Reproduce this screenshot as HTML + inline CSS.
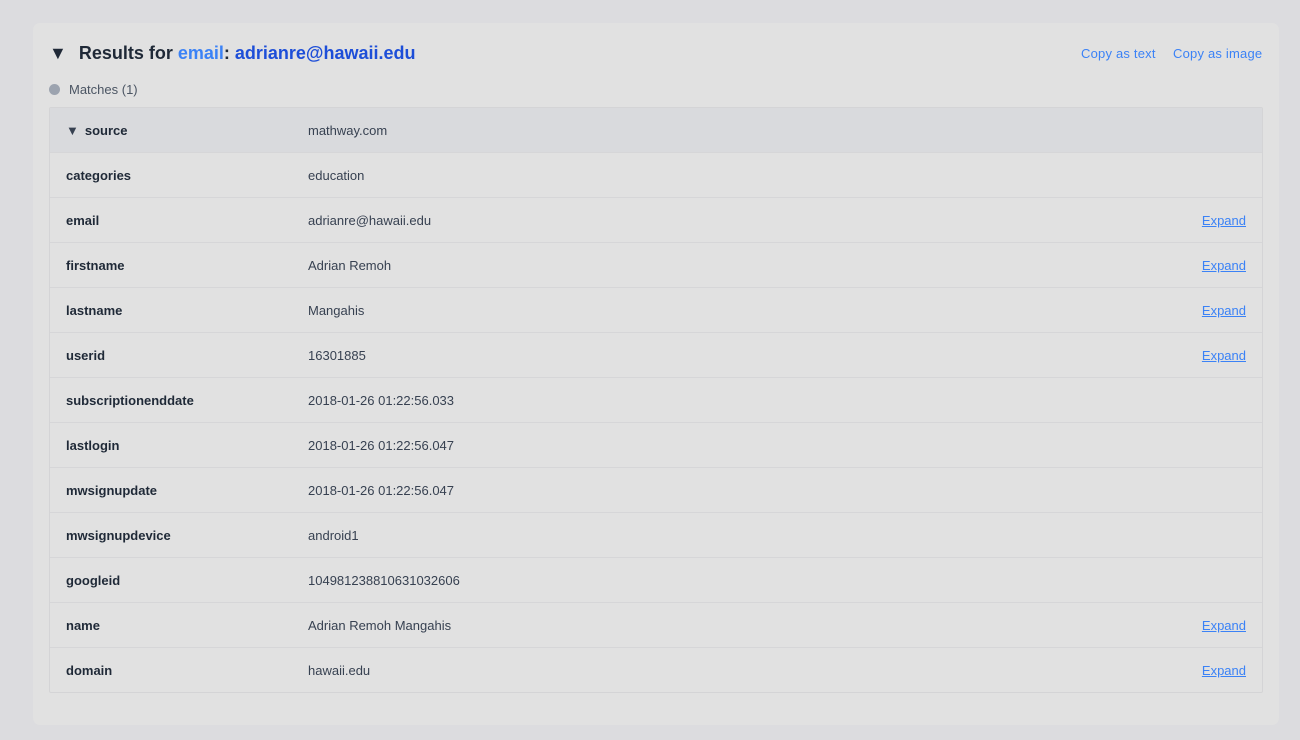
<!DOCTYPE html>
<html><head><style>
body{margin:0;background:#dcdcdf;font-family:"Liberation Sans",sans-serif;width:1300px;height:740px;overflow:hidden}
.card{position:absolute;left:33px;top:23px;width:1246px;height:702px;background:#e1e1e1;border-radius:7px}
.title{position:absolute;left:16px;top:20px;font-size:18px;font-weight:bold;color:#1f2937}
.tri{display:inline-block;margin-right:12px;font-size:18px}
.blue{color:#3b82f6}.dblue{color:#1d4ed8}
.copy{position:absolute;top:23px;font-size:13px;color:#3b82f6;letter-spacing:0.2px}
.match{position:absolute;left:16px;top:59px;font-size:13px;color:#4b5563}
.dot{display:inline-block;width:11px;height:11px;border-radius:50%;background:#9ca3af;vertical-align:-1px;margin-right:9px}
.tbl{position:absolute;left:16px;top:84px;width:1212px;border:1px solid #d4d4d6;border-radius:2px}
.row{height:44px;border-top:1px solid #d6d6d8;position:relative;font-size:13px;color:#374151}
.row:first-child{border-top:none;background:#d9dadd}
.k{position:absolute;left:16px;top:15px;font-weight:bold;color:#1f2937}
.v{position:absolute;left:258px;top:15px}
.e{position:absolute;right:16px;top:15px;color:#3b82f6;text-decoration:underline}
</style></head><body>
<div class="card">
<div class="title"><span class="tri">▼</span>Results for <span class="blue">email</span>: <span class="dblue">adrianre@hawaii.edu</span></div>
<div class="copy" style="left:1048px">Copy as text</div>
<div class="copy" style="left:1140px">Copy as image</div>
<div class="match"><span class="dot"></span>Matches (1)</div>
<div class="tbl">
<div class="row"><span class="k"><span style="font-size:13px;color:#374151;margin-right:6px">▼</span>source</span><span class="v">mathway.com</span></div>
<div class="row"><span class="k">categories</span><span class="v">education</span></div>
<div class="row"><span class="k">email</span><span class="v">adrianre@hawaii.edu</span><span class="e">Expand</span></div>
<div class="row"><span class="k">firstname</span><span class="v">Adrian Remoh</span><span class="e">Expand</span></div>
<div class="row"><span class="k">lastname</span><span class="v">Mangahis</span><span class="e">Expand</span></div>
<div class="row"><span class="k">userid</span><span class="v">16301885</span><span class="e">Expand</span></div>
<div class="row"><span class="k">subscriptionenddate</span><span class="v">2018-01-26 01:22:56.033</span></div>
<div class="row"><span class="k">lastlogin</span><span class="v">2018-01-26 01:22:56.047</span></div>
<div class="row"><span class="k">mwsignupdate</span><span class="v">2018-01-26 01:22:56.047</span></div>
<div class="row"><span class="k">mwsignupdevice</span><span class="v">android1</span></div>
<div class="row"><span class="k">googleid</span><span class="v">104981238810631032606</span></div>
<div class="row"><span class="k">name</span><span class="v">Adrian Remoh Mangahis</span><span class="e">Expand</span></div>
<div class="row"><span class="k">domain</span><span class="v">hawaii.edu</span><span class="e">Expand</span></div>
</div>
</div>
</body></html>
